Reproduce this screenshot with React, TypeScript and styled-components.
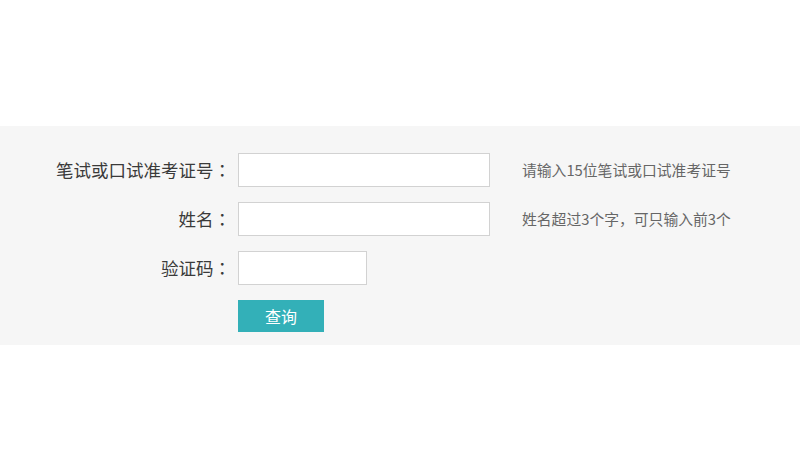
import styled, { createGlobalStyle } from "styled-components"

const GlobalStyle = createGlobalStyle`
    html, body {
        margin: 0;
        padding: 0;
        background: #fff;
    }
    body {
        font-family: "Noto Sans CJK SC", "Noto Sans", sans-serif;
        color: #333;
    }
`

const fields = [
    { label: "笔试或口试准考证号", hint: "请输入15位笔试或口试准考证号", short: false },
    { label: "姓名", hint: "姓名超过3个字，可只输入前3个", short: false },
    { label: "验证码", hint: "", short: true },
]

export default function App() {
    return (
        <Page>
            <GlobalStyle />
            <Band>
                <Form onSubmit={(e) => e.preventDefault()}>
                    {fields.map((f) => (
                        <Row key={f.label}>
                            <Label>
                                {f.label}
                                <Colon>：</Colon>
                            </Label>
                            <Input type="text" $short={f.short} />
                            {f.hint && <Hint>{f.hint}</Hint>}
                        </Row>
                    ))}
                    <Row>
                        <span />
                        <Button type="submit">查询</Button>
                    </Row>
                </Form>
            </Band>
        </Page>
    )
}

const Page = styled.div`
    padding-top: 126px;
    height: 449px;
    box-sizing: border-box;
`

const Band = styled.section`
    background-color: #f6f6f6;
    padding: 27px 0 13px;
`

const Form = styled.form`
    display: flex;
    flex-direction: column;
    gap: 15px;
`

const Row = styled.div`
    display: grid;
    grid-template-columns: 231px auto auto;
    justify-content: start;
    align-items: center;
    column-gap: 7px;
`

const Label = styled.label`
    text-align: right;
    font-size: 17.5px;
    line-height: 20px;
    color: #3a3a3a;
    white-space: nowrap;
`

// the TC face centres the full-width colon in its box
const Colon = styled.span`
    font-family: "Noto Sans CJK TC", sans-serif;
`

const Input = styled.input<{ $short?: boolean }>`
    width: ${(p) => (p.$short ? "129px" : "252px")};
    height: 34px;
    box-sizing: border-box;
    border: 1px solid #d2d2d2;
    background: #fff;
    outline: none;
    padding: 0 8px;
    font-size: 15px;
`

const Hint = styled.span`
    margin-left: 25px;
    font-size: 14.8px;
    line-height: 20px;
    color: #666;
    white-space: nowrap;
`

const Button = styled.button`
    width: 86px;
    height: 32px;
    border: none;
    background-color: #33b0b8;
    color: #fff;
    font-family: inherit;
    font-size: 16px;
    cursor: pointer;
`
